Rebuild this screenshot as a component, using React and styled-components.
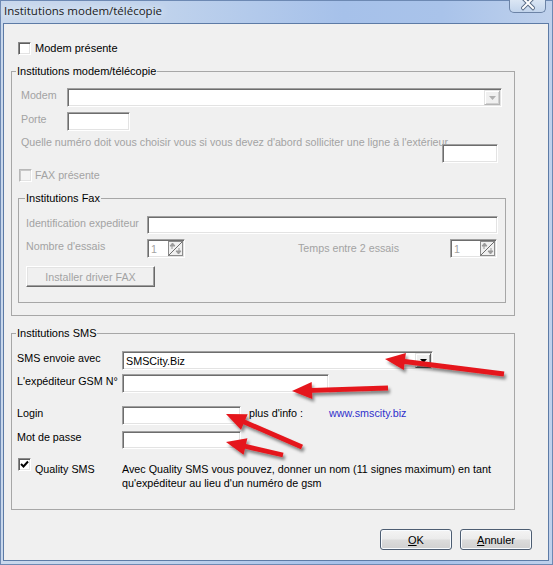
import React from 'react'
import styled, { createGlobalStyle } from 'styled-components'

const GlobalStyle = createGlobalStyle`
  html, body {
    margin: 0;
    padding: 0;
    background: #fff;
  }
  body {
    font-family: "Liberation Sans", Arial, sans-serif;
    color: #000;
  }
`

const GRAY = `#a3a3a3`
const SMALL = 10.7
const NORMAL = 10.75

const Window = styled.div`
  position: relative;
  width: 553px;
  height: 565px;
  box-sizing: border-box;
  display: flex;
  flex-direction: column;
  padding: 0 4px 4px 3px;
  background: linear-gradient(90deg, #c9d8ec 0%, #bfd2ec 30%, #a6c1ea 62%, #a9c3ea 80%, #bfd1ec 100%);
  box-shadow: inset 0 0 0 1px #6d89b3;
  overflow: hidden;
`

const TitleBar = styled.div`
  height: 23px;
  display: flex;
  align-items: flex-start;
  flex-shrink: 0;
`

const Title = styled.span`
  font-family: "Open Sans", "Liberation Sans", sans-serif;
  font-size: 11.5px;
  line-height: 21px;
  padding-left: 1px;
  color: #1a1a1a;
  text-shadow: 0 0 6px #e8f0fa, 0 0 10px #e8f0fa;
`

const CloseButton = styled.div`
  margin-left: auto;
  margin-right: 3px;
  width: 37px;
  height: 13px;
  box-sizing: border-box;
  border: 1px solid #6c83a6;
  border-top: none;
  border-radius: 0 0 5px 5px;
  background: linear-gradient(#dbe6f4, #c2d4ec);
  display: flex;
  justify-content: center;
  align-items: flex-start;
  overflow: hidden;
`

const Client = styled.div`
  flex: 1;
  background: #f0f0f0;
  border: 1px solid #5d7ba6;
  display: flex;
  flex-direction: column;
  align-items: flex-start;
`

const Group = styled.div`
  box-sizing: border-box;
  width: ${p => p.$w}px;
  margin: ${p => p.$top}px 0 0 ${p => p.$x}px;
  padding-bottom: ${p => p.$pb}px;
  border: 1px solid #a7a7a7;
  display: flex;
  flex-direction: column;
  align-items: flex-start;
`

const Legend = styled.div`
  margin: -7px 0 0 ${p => p.$x}px;
  padding: 0 1px;
  background: #f0f0f0;
  font-size: 11px;
  line-height: 13px;
  color: #000;
`

const Row = styled.div`
  display: flex;
  align-items: flex-start;
  margin: ${p => p.$top}px 0 0 ${p => p.$x || 0}px;
`

const Label = styled.span`
  flex-shrink: 0;
  width: ${p => (p.$w ? `${p.$w}px` : `auto`)};
  margin-left: ${p => p.$ml || 0}px;
  padding-top: ${p => (p.$pt === undefined ? 2 : p.$pt)}px;
  font-size: ${p => (p.$disabled ? SMALL : NORMAL)}px;
  line-height: 13px;
  color: ${p => (p.$disabled ? GRAY : `#000`)};
  white-space: nowrap;
`

const Link = styled(Label)`
  color: #3030cc;
`

const Field = styled.div`
  box-sizing: border-box;
  flex-shrink: 0;
  width: ${p => p.$w}px;
  height: ${p => p.$h || 19}px;
  margin-top: ${p => p.$mt || 0}px;
  margin-left: ${p => p.$ml || 0}px;
  padding: 1px 1px 1px 2px;
  background: #fff;
  border: 1px solid;
  border-color: #a0a0a0 #fff #fff #a0a0a0;
  box-shadow: inset 1px 1px 0 #6d6d6d, inset -1px -1px 0 #e3e3e3;
  display: flex;
  align-items: center;
  font-size: ${p => (p.$disabled ? SMALL : NORMAL)}px;
  color: ${p => (p.$disabled ? GRAY : `#000`)};
`

const FieldText = styled.span`
  flex: 1;
  padding-left: 1px;
  white-space: nowrap;
`

const DropButton = styled.div`
  box-sizing: border-box;
  width: 16px;
  height: 15px;
  align-self: center;
  background: #f0f0f0;
  border: 1px solid;
  border-color: ${p => (p.$disabled ? `#e3e3e3 #b5b5b5 #b5b5b5 #e3e3e3` : `#e3e3e3 #5a5a5a #5a5a5a #e3e3e3`)};
  box-shadow: inset 1px 1px 0 #fff, inset -1px -1px 0 ${p => (p.$disabled ? `#d0d0d0` : `#a0a0a0`)};
  display: flex;
  align-items: center;
  justify-content: center;
`

const Box = styled.div`
  box-sizing: border-box;
  flex-shrink: 0;
  width: 13px;
  height: 13px;
  margin-left: ${p => p.$ml || 0}px;
  background: ${p => (p.$disabled ? `#f4f4f4` : `#fff`)};
  border: 1px solid;
  border-color: ${p => (p.$disabled ? `#b8b8b8 #fff #fff #b8b8b8` : `#8a8a8a #fff #fff #8a8a8a`)};
  box-shadow: inset 1px 1px 0 ${p => (p.$disabled ? `#c8c8c8` : `#5e5e5e`)}, inset -1px -1px 0 #e3e3e3;
  display: flex;
  align-items: center;
  justify-content: center;
`

const CheckRow = styled.div`
  display: flex;
  align-items: center;
  gap: ${p => p.$gap || 4}px;
  margin: ${p => p.$top}px 0 0 ${p => p.$x}px;
  height: 13px;
`

const CheckText = styled.span`
  font-size: ${p => (p.$disabled ? SMALL : 11)}px;
  line-height: 13px;
  color: ${p => (p.$disabled ? GRAY : `#000`)};
  white-space: nowrap;
`

const LongText = styled.span`
  flex-shrink: 0;
  width: ${p => p.$w}px;
  font-size: ${SMALL}px;
  line-height: 13px;
  color: ${GRAY};
  white-space: nowrap;
  overflow: visible;
`

const FlatButton = styled.div`
  box-sizing: border-box;
  width: 129px;
  height: 21px;
  margin: 8px 0 0 7px;
  background: #f0f0f0;
  border: 1px solid;
  border-color: #fff #696969 #696969 #fff;
  box-shadow: inset -1px -1px 0 #a0a0a0, inset 1px 1px 0 #e3e3e3;
  display: flex;
  align-items: center;
  justify-content: center;
  font-size: ${SMALL}px;
  color: ${GRAY};
`

const QualityRow = styled.div`
  display: flex;
  align-items: flex-start;
  margin: 9px 0 0 6px;
`

const QualityCheck = styled.div`
  width: 104px;
  display: flex;
  align-items: flex-start;
  gap: 4px;
`

const Description = styled.div`
  margin-top: 4px;
  font-size: ${NORMAL}px;
  line-height: 14px;
  white-space: nowrap;
`

const Footer = styled.div`
  align-self: stretch;
  display: flex;
  justify-content: flex-end;
  gap: 8px;
  margin-top: 19px;
  padding-right: 16px;
`

const Button = styled.div`
  box-sizing: border-box;
  width: 72px;
  height: 21px;
  border: 1px solid #4d5d72;
  border-radius: 3px;
  background: linear-gradient(#f4f4f4 0%, #ebebeb 48%, #dcdcdc 52%, #d0d0d0 100%);
  box-shadow: inset 0 0 0 1px #f8fbfe;
  display: flex;
  align-items: center;
  justify-content: center;
  font-size: 11px;
  color: #000;

  u {
    text-decoration: underline;
  }
`

const Overlay = styled.svg`
  position: absolute;
  left: 0;
  top: 0;
  pointer-events: none;
`

const CloseGlyph = () =>
  <svg width="14" height="11" viewBox="0 0 14 11">
    <path d="M2 -2 L12 8 M12 -2 L2 8" stroke="#5a6c86" strokeWidth="4" strokeLinecap="square"/>
    <path d="M2 -2 L12 8 M12 -2 L2 8" stroke="#ffffff" strokeWidth="2" strokeLinecap="square"/>
  </svg>

const DownArrow = ({color}) =>
  <svg width="7" height="4" viewBox="0 0 7 4">
    <path d="M0 0 H7 L3.5 4 Z" fill={color}/>
  </svg>

const SpinGlyph = () =>
  <svg width="15" height="15" viewBox="0 0 15 15">
    <rect x="0.5" y="0.5" width="14" height="14" fill="#f0f0f0" stroke="#8c8c8c"/>
    <path d="M0.5 14.5 L14.5 0.5" stroke="#6d6d6d"/>
    <path d="M4.5 2 L2 5 H7 Z M4 5 V8" stroke="#9a9a9a" fill="#9a9a9a" strokeWidth="1"/>
    <path d="M10.5 13 L8 10 H13 Z M11 10 V7" stroke="#9a9a9a" fill="#9a9a9a" strokeWidth="1"/>
  </svg>

const CheckMark = () =>
  <svg width="9" height="9" viewBox="0 0 9 9">
    <path d="M1 4 L3.5 6.5 L8 1.5" stroke="#000" strokeWidth="2" fill="none"/>
  </svg>

const Combo = ({w, value, disabled}) =>
  <Field $w={w} $disabled={disabled}>
    <FieldText>{value}</FieldText>
    <DropButton $disabled={disabled}>
      <DownArrow color={disabled ? `#b0b0b0` : `#000`}/>
    </DropButton>
  </Field>

const Spin = ({w, ml}) =>
  <Field $w={w} $ml={ml} $disabled>
    <FieldText>1</FieldText>
    <SpinGlyph/>
  </Field>

const arrowPoints = ([x1, y1], [x2, y2]) => {
  const len = Math.hypot(x2 - x1, y2 - y1)
  const ux = (x2 - x1) / len
  const uy = (y2 - y1) / len
  const px = -uy
  const py = ux
  const shaft = 2.4
  const headLen = 20
  const headW = 8.5
  const bx = x2 - ux * headLen
  const by = y2 - uy * headLen
  const pts = [
    [x1 + px * shaft, y1 + py * shaft],
    [bx + px * shaft, by + py * shaft],
    [bx + px * headW, by + py * headW],
    [x2, y2],
    [bx - px * headW, by - py * headW],
    [bx - px * shaft, by - py * shaft],
    [x1 - px * shaft, y1 - py * shaft],
  ]
  return pts.map(p => p.map(v => v.toFixed(1)).join(`,`)).join(` `)
}

const arrows = [
  [[504, 374], [385, 359]],
  [[388, 388], [292, 391]],
  [[302, 447], [226, 414]],
  [[283, 455], [226, 442]],
]

const App = () =>
  <>
    <GlobalStyle/>
    <Window>
      <TitleBar>
        <Title>Institutions modem/télécopie</Title>
        <CloseButton><CloseGlyph/></CloseButton>
      </TitleBar>

      <Client>
        <CheckRow $top={18} $x={14}>
          <Box/>
          <CheckText>Modem présente</CheckText>
        </CheckRow>

        <Group $w={504} $top={16} $x={7} $pb={12}>
          <Legend $x={4}>Institutions modem/télécopie</Legend>

          <Row $top={10} $x={9}>
            <Label $w={46} $disabled $pt={1}>Modem</Label>
            <Combo w={435} disabled/>
          </Row>

          <Row $top={5} $x={9}>
            <Label $w={46} $disabled $pt={1}>Porte</Label>
            <Field $w={63} $disabled/>
          </Row>

          <Row $top={5} $x={9}>
            <LongText $w={421}>
              Quelle numéro doit vous choisir vous si vous devez d'abord solliciter une ligne à l'extérieur
            </LongText>
            <Field $w={56} $mt={8} $disabled/>
          </Row>

          <CheckRow $top={6} $x={7} $gap={3}>
            <Box $disabled/>
            <CheckText $disabled>FAX présente</CheckText>
          </CheckRow>

          <Group $w={488} $top={16} $x={6} $pb={15}>
            <Legend $x={6}>Institutions Fax</Legend>

            <Row $top={11} $x={7}>
              <Label $w={121} $disabled $pt={1}>Identification expediteur</Label>
              <Field $w={351} $h={18} $disabled/>
            </Row>

            <Row $top={5} $x={7}>
              <Label $w={121} $disabled $pt={1}>Nombre d'essais</Label>
              <Spin w={38}/>
              <Label $w={152} $ml={113} $disabled $pt={3}>Temps entre 2 essais</Label>
              <Spin w={47}/>
            </Row>

            <FlatButton>Installer driver FAX</FlatButton>
          </Group>
        </Group>

        <Group $w={504} $top={17} $x={7} $pb={19}>
          <Legend $x={4}>Institutions SMS</Legend>

          <Row $top={11} $x={5}>
            <Label $w={105} $pt={1}>SMS envoie avec</Label>
            <Combo w={311} value={`SMSCity.Biz`}/>
          </Row>

          <Row $top={4} $x={5}>
            <Label $w={105} $pt={1}>L'expéditeur GSM N°</Label>
            <Field $w={207}/>
          </Row>

          <Row $top={13} $x={5}>
            <Label $w={105} $pt={1}>Login</Label>
            <Field $w={119}/>
            <Label $w={80} $ml={8} $pt={1}>plus d'info :</Label>
            <Link $pt={1}>www.smscity.biz</Link>
          </Row>

          <Row $top={6} $x={5}>
            <Label $w={105} $pt={0}>Mot de passe</Label>
            <Field $w={119} $h={18}/>
          </Row>

          <QualityRow>
            <QualityCheck>
              <Box><CheckMark/></Box>
              <Description>Quality SMS</Description>
            </QualityCheck>
            <Description>
              Avec Quality SMS vous pouvez, donner un nom (11 signes maximum) en tant<br/>
              qu'expéditeur au lieu d'un numéro de gsm
            </Description>
          </QualityRow>
        </Group>

        <Footer>
          <Button><span><u>O</u>K</span></Button>
          <Button><span><u>A</u>nnuler</span></Button>
        </Footer>
      </Client>

      <Overlay width="553" height="565" viewBox="0 0 553 565">
        <defs>
          <filter id="arrowShadow" x="-20%" y="-50%" width="140%" height="200%">
            <feDropShadow dx="2" dy="3" stdDeviation="1.6" floodColor="#000" floodOpacity="0.45"/>
          </filter>
        </defs>
        {arrows.map(([from, to], i) =>
          <polygon key={i} points={arrowPoints(from, to)} fill="#e5161b" filter="url(#arrowShadow)"/>
        )}
      </Overlay>
    </Window>
  </>

export default App
